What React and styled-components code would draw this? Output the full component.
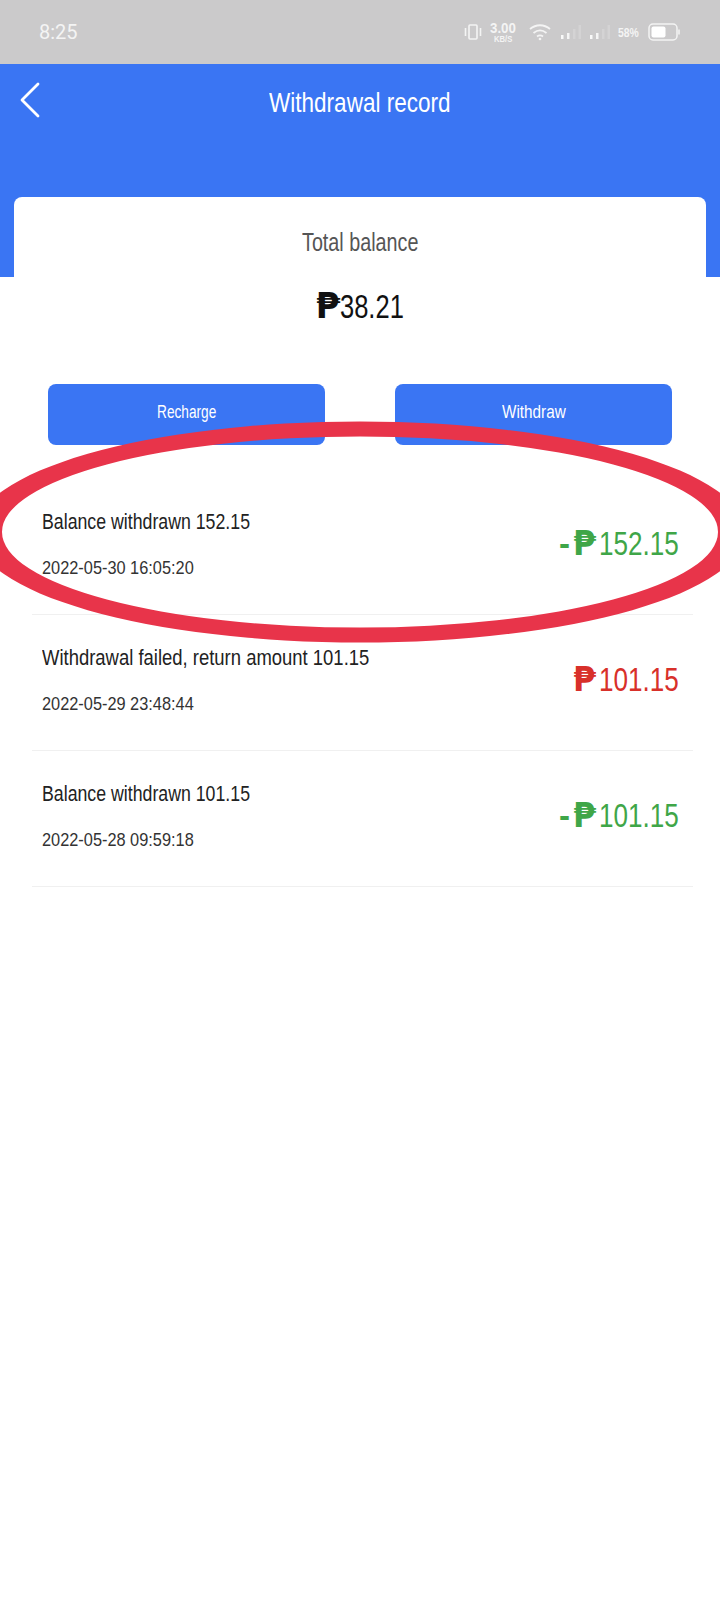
import React from 'react'
import styled, { createGlobalStyle } from 'styled-components'

const GlobalStyle = createGlobalStyle`
  html, body {
    margin: 0;
    padding: 0;
    background: #fff;
  }
  body {
    font-family: "Liberation Sans", Arial, sans-serif;
  }
`

// the app font is very condensed, so text gets a fixed box and is squeezed into it
const Squeezed = styled.span`
  display: inline-block;
  width: ${(p) => p.$w}px;
  white-space: nowrap;
  text-align: left;
  transform: scaleX(${(p) => p.$s});
  transform-origin: left center;
`

const Page = styled.div`
  position: relative;
  width: 720px;
  height: 1600px;
  overflow: hidden;
  background: #fff;
`

const StatusBar = styled.div`
  height: 64px;
  background: #cbcacb;
  display: flex;
  align-items: center;
  justify-content: space-between;
  padding: 0 39px;
  color: #f4f4f4;
`

const Clock = styled.span`
  font-family: Roboto, sans-serif;
  font-size: 20px;
`

const StatusIcons = styled.div`
  display: flex;
  align-items: center;
  gap: 8px;
`

const Speed = styled.div`
  display: flex;
  flex-direction: column;
  width: 30px;
  line-height: 1;
  font-size: 14px;
  font-weight: 700;

  small {
    font-size: 9px;
    margin-left: 4px;
  }
`

const Percent = styled.span`
  font-size: 13px;
  font-weight: 700;
`

const Header = styled.header`
  height: 213px;
  background: #3a75f3;
  display: flex;
  justify-content: center;
  position: relative;
`

const BackButton = styled.button`
  position: absolute;
  left: 17px;
  top: 16px;
  width: 26px;
  height: 40px;
  padding: 0;
  border: none;
  background: none;
`

const Title = styled.h1`
  margin: 22px 0 0;
  font-size: 28px;
  line-height: 34px;
  font-weight: 400;
  color: #fff;
`

const Card = styled.section`
  position: relative;
  margin: -80px 14px 0;
  padding-top: 28px;
  background: #fff;
  border-radius: 8px 8px 0 0;
  display: flex;
  flex-direction: column;
  align-items: center;
`

const BalanceLabel = styled.div`
  font-size: 26px;
  line-height: 34px;
  color: #555;
`

const BalanceValue = styled.div`
  margin-top: 27px;
  display: flex;
  align-items: baseline;
  font-size: 34px;
  line-height: 40px;
  color: #111;
`

const Actions = styled.div`
  align-self: stretch;
  margin-top: 58px;
  padding: 0 34px;
  display: flex;
  justify-content: space-between;
`

const ActionButton = styled.button`
  width: 277px;
  height: 61px;
  padding: 0 0 4px;
  border: none;
  border-radius: 8px;
  background: #3a75f3;
  color: #fff;
  font-family: inherit;
  font-size: 18px;
`

const Records = styled.ul`
  list-style: none;
  margin: 34px 27px 0 32px;
  padding: 0;
`

const Record = styled.li`
  height: 135px;
  padding: 0 14px 0 10px;
  border-bottom: 1px solid #f0f0f0;
  display: flex;
  align-items: center;
  justify-content: space-between;
`

const RecordText = styled.div`
  display: flex;
  flex-direction: column;
  gap: 20px;
  margin-top: -4px;
`

const RecordTitle = styled.div`
  font-size: 22px;
  line-height: 26px;
  color: #222;
`

const RecordDate = styled.div`
  font-size: 19px;
  line-height: 26px;
  color: #333;
`

const Amount = styled.div`
  display: flex;
  align-items: baseline;
  margin-bottom: 5px;
  font-size: 33px;
  line-height: 40px;
  color: ${(p) => (p.$failed ? '#d8302a' : '#3fa648')};
`

const Dash = styled.span`
  margin-right: 3px;
  font-weight: 700;
`

const Peso = styled.b`
  margin-right: ${(p) => p.$gap}px;
  font-family: "DejaVu Sans", sans-serif;
  font-size: ${(p) => p.$size}px;
`

const Circle = styled.svg`
  position: absolute;
  left: 0;
  top: 0;
  pointer-events: none;
`

const records = [
  { title: 'Balance withdrawn 152.15', date: '2022-05-30 16:05:20', amount: '152.15', sign: '-', w: 208, s: 0.806 },
  { title: 'Withdrawal failed, return amount 101.15', date: '2022-05-29 23:48:44', amount: '101.15', sign: '', failed: true, w: 328, s: 0.839 },
  { title: 'Balance withdrawn 101.15', date: '2022-05-28 09:59:18', amount: '101.15', sign: '-', w: 208, s: 0.806 },
]

const SignalBars = () => (
  <svg width="21" height="16" viewBox="0 0 21 16" fill="#fff">
    <rect x="1" y="11" width="2.5" height="4" opacity="0.9" />
    <rect x="7" y="9" width="2.5" height="6" opacity="0.8" />
    <rect x="13" y="5" width="2.5" height="10" opacity="0.18" />
    <rect x="18.5" y="1" width="2.5" height="14" opacity="0.18" />
  </svg>
)

export default function App() {
  return (
    <Page>
      <GlobalStyle />
      <StatusBar>
        <Clock>8:25</Clock>
        <StatusIcons>
          <svg width="18" height="18" viewBox="0 0 18 18" fill="none" stroke="#f4f4f4" strokeWidth="1.6">
            <rect x="5" y="2" width="8" height="14" rx="1" />
            <path d="M1.5 5v8M16.5 5v8" />
          </svg>
          <Speed>
            <Squeezed $w={30} $s={0.95}>3.00</Squeezed>
            <small>
              <Squeezed $w={22} $s={0.85}>KB/S</Squeezed>
            </small>
          </Speed>
          <svg width="24" height="18" viewBox="0 0 24 18" fill="none" stroke="#f4f4f4" strokeWidth="1.8">
            <path d="M2 6c6-5 14-5 20 0M5.5 10c4-3.2 9-3.2 13 0M9 13.5c2-1.4 4-1.4 6 0" />
            <circle cx="12" cy="16" r="1.3" fill="#f4f4f4" stroke="none" />
          </svg>
          <SignalBars />
          <SignalBars />
          <Percent>
            <Squeezed $w={22} $s={0.8}>58%</Squeezed>
          </Percent>
          <svg width="33" height="18" viewBox="0 0 33 18" fill="none">
            <rect x="1" y="1" width="28" height="16" rx="4" stroke="#f4f4f4" strokeWidth="1.5" />
            <rect x="3.5" y="3.5" width="14" height="11" rx="2" fill="#fff" />
            <path d="M31 6.5v5" stroke="#f4f4f4" strokeWidth="1.5" />
          </svg>
        </StatusIcons>
      </StatusBar>
      <Header>
        <BackButton aria-label="Back">
          <svg width="26" height="40" viewBox="0 0 26 40" fill="none" stroke="#fff" strokeWidth="2.8" strokeLinecap="round" strokeLinejoin="round">
            <path d="M21 4 5 20l16 16" />
          </svg>
        </BackButton>
        <Title>
          <Squeezed $w={182} $s={0.805}>Withdrawal record</Squeezed>
        </Title>
      </Header>
      <Card>
        <BalanceLabel>
          <Squeezed $w={116} $s={0.76}>Total balance</Squeezed>
        </BalanceLabel>
        <BalanceValue>
          <Peso $size={35} $gap={0}>₱</Peso>
          <Squeezed $w={64} $s={0.75}>38.21</Squeezed>
        </BalanceValue>
        <Actions>
          <ActionButton>
            <Squeezed $w={59} $s={0.76}>Recharge</Squeezed>
          </ActionButton>
          <ActionButton>
            <Squeezed $w={64} $s={0.85}>Withdraw</Squeezed>
          </ActionButton>
        </Actions>
      </Card>
      <Records>
        {records.map((r) => (
          <Record key={r.date}>
            <RecordText>
              <RecordTitle>
                <Squeezed $w={r.w} $s={r.s}>{r.title}</Squeezed>
              </RecordTitle>
              <RecordDate>
                <Squeezed $w={152} $s={0.86}>{r.date}</Squeezed>
              </RecordDate>
            </RecordText>
            <Amount $failed={r.failed}>
              {r.sign && <Dash>{r.sign}</Dash>}
              <Peso $size={33} $gap={3}>₱</Peso>
              <Squeezed $w={80} $s={0.79}>{r.amount}</Squeezed>
            </Amount>
          </Record>
        ))}
      </Records>
      <Circle width="720" height="1600" viewBox="0 0 720 1600">
        <path
          fill="#e8344a"
          fillRule="evenodd"
          d="M-25 532a385 110.5 0 1 0 770 0a385 110.5 0 1 0 -770 0ZM2 532a358 95.5 0 1 0 716 0a358 95.5 0 1 0 -716 0Z"
        />
      </Circle>
    </Page>
  )
}
